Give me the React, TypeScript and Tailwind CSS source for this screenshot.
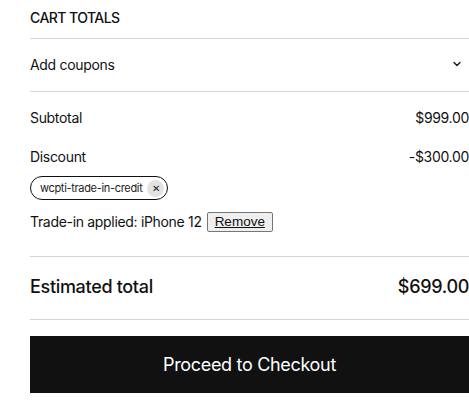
import { ChevronDown } from "lucide-react";

const font = { fontFamily: "Inter, 'Noto Sans', sans-serif" };

export default function App() {
  return (
    <div className="w-[469px] h-[409px] bg-white overflow-hidden text-[#111] tracking-[-0.02em]" style={font}>
      <div className="pl-[30px]">
        <h2 className="h-[38px] pt-[9px] text-[14px] leading-[17px] font-medium uppercase tracking-[-0.04em]">
          Cart totals
        </h2>
        <div className="border-t border-[#d6d6d6]" />
        <button className="flex h-[52px] w-full items-center justify-between pr-[6px] pb-[2px] text-[14px]">
          <span>Add coupons</span>
          <ChevronDown size={12} strokeWidth={2.5} />
        </button>
        <div className="border-t border-[#d6d6d6]" />
        <div className="pt-[17px] pb-[24px] text-[14px]">
          <div className="flex items-center justify-between h-[17px]">
            <span>Subtotal</span>
            <span>$999.00</span>
          </div>
          <div className="mt-[22px] flex items-center justify-between h-[17px]">
            <span>Discount</span>
            <span>-$300.00</span>
          </div>
          <div className="mt-[11px] inline-flex h-[24px] items-center gap-[5px] rounded-full border border-[#111] pl-[9px] pr-[3px] text-[11px] text-[#222]">
            <span>wcpti-trade-in-credit</span>
            <span className="flex h-[17px] w-[17px] items-center justify-center rounded-full bg-[#e3e3e3] text-[10px] leading-none">
              ✕
            </span>
          </div>
          <div className="mt-[11px] flex items-center gap-[5px]">
            <span>Trade-in applied: iPhone 12</span>
            <button
              className="h-[20px] rounded-[2px] border border-[#767676] bg-[#efefef] px-[7px] text-[13.5px] leading-none underline tracking-normal"
              style={{ fontFamily: "'Liberation Sans', Arial, sans-serif" }}
            >
              Remove
            </button>
          </div>
        </div>
        <div className="border-t border-[#d6d6d6]" />
        <div className="flex h-[62px] items-center justify-between pb-[3px] text-[18px] font-medium">
          <span>Estimated total</span>
          <span>$699.00</span>
        </div>
        <div className="border-t border-[#d6d6d6]" />
        <button className="mt-[16px] flex h-[57px] w-full items-center justify-center bg-[#111] text-[18px] text-white">
          Proceed to Checkout
        </button>
      </div>
    </div>
  );
}
